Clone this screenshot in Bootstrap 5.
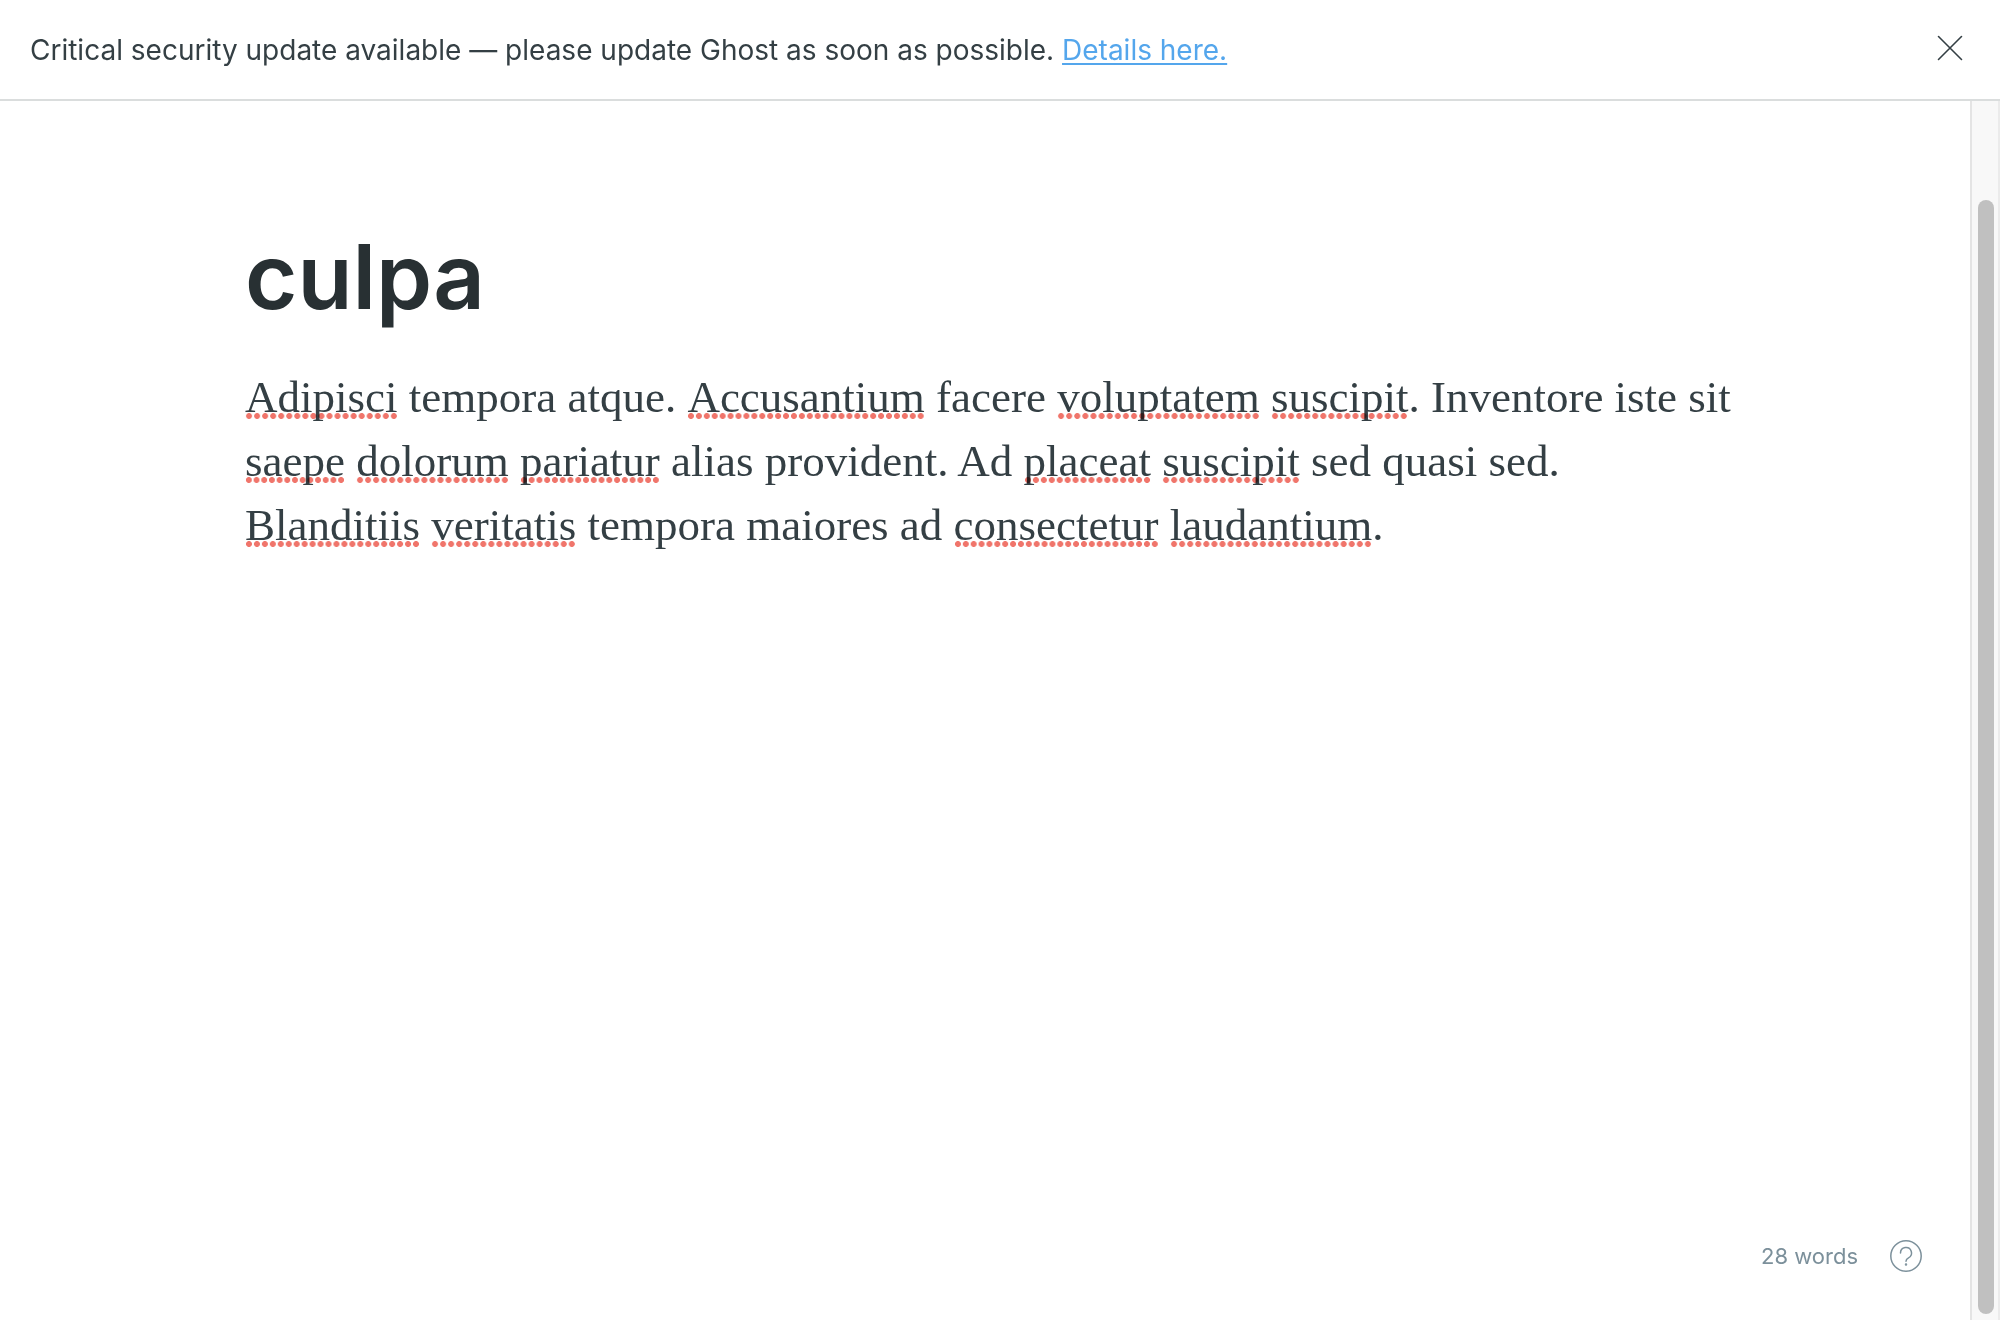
<!DOCTYPE html>
<html lang="en">
<head>
<meta charset="utf-8">
<meta name="viewport" content="width=device-width, initial-scale=1">
<title>Ghost editor</title>
<link href="https://cdn.jsdelivr.net/npm/bootstrap@5.3.0/dist/css/bootstrap.min.css" rel="stylesheet">
<style>
body { font-family: Inter, "Liberation Sans", sans-serif; color: #343f44; background: #fff; }
.notice { padding: 0 36px 0 30px; min-height: 101px; border-bottom: 2px solid #dadddd; font-size: 28px; line-height: 36px; }
.notice a { color: #54a6ec; text-decoration-thickness: 2px; text-underline-offset: 3px; }
.close-btn { width: 28px; height: 28px; margin-bottom: 3px; }
.writing { padding: 122px 235px 0 245px; }
.post-title { font-size: 90px; line-height: 108px; font-weight: 600; color: #283033; resize: none; outline: 0; overflow: hidden; height: 108px; }
.post-text { font-family: "Liberation Serif", Georgia, serif; font-size: 45px; line-height: 64px; margin-top: 34px; outline: 0; }
.typo { position: relative; display: inline-block; }
.typo::after { content: ""; position: absolute; left: 0; right: 0; bottom: 10px; height: 6px; mix-blend-mode: multiply;
  background: radial-gradient(circle at center, #f0756b 0 2.6px, transparent 3.3px) 0 0 / 8px 6px round; }
.status { gap: 32px; padding: 0 48px 48px; font-size: 22px; line-height: 32px; color: #7c909b; }
.help-link { color: inherit; }
.scroll-track { width: 30px; padding: 99px 4px 6px 6px; background: #f8f8f8; border-left: 2px solid #e4e4e4; border-right: 2px solid #ebebeb; }
.scroll-thumb { background: #c0c0c0; border-radius: 8px; }
</style>
</head>
<body>
<div class="d-flex flex-column vh-100">
  <header class="notice d-flex align-items-center justify-content-between">
    <div>Critical security update available — please update Ghost as soon as possible. <a href="#details">Details here.</a></div>
    <button type="button" class="close-btn btn p-0 border-0 d-flex" aria-label="Close">
      <svg width="28" height="28" viewBox="0 0 28 28" fill="none" stroke="#343f44" stroke-width="1.6" stroke-linecap="round"><path d="M2.500 2.500l23 23M25.500 2.500l-23 23"/></svg>
    </button>
  </header>
  <div class="d-flex flex-grow-1">
    <main class="d-flex flex-column flex-grow-1">
      <div class="writing flex-grow-1">
        <textarea class="post-title d-block w-100 border-0 p-0 bg-transparent" rows="1" spellcheck="false" aria-label="Post title">culpa</textarea>
        <div class="post-text" contenteditable="true" spellcheck="false" role="textbox" aria-multiline="true" aria-label="Post content"><p class="mb-0"><span class="typo">Adipisci</span> tempora atque. <span class="typo">Accusantium</span> facere <span class="typo">voluptatem</span> <span class="typo">suscipit</span>. Inventore iste sit <span class="typo">saepe</span> <span class="typo">dolorum</span> <span class="typo">pariatur</span> alias provident. Ad <span class="typo">placeat</span> <span class="typo">suscipit</span> sed quasi sed. <span class="typo">Blanditiis</span> <span class="typo">veritatis</span> tempora maiores ad <span class="typo">consectetur</span> <span class="typo">laudantium</span>.</p></div>
      </div>
      <footer class="status d-flex align-items-center justify-content-end">
        <span>28 words</span>
        <a class="help-link d-flex" href="#help" aria-label="Help">
          <svg width="32" height="32" viewBox="0 0 32 32" fill="none" stroke="currentColor" stroke-width="1.5" stroke-linecap="round" stroke-linejoin="round"><circle cx="16" cy="16" r="15.2"/><path d="M10.500 13a5.500 5.500 0 1 1 8 4.900c-1.600.8-2.500 1.400-2.500 3.300"/><circle cx="16" cy="24.600" r=".5" fill="currentColor"/></svg>
        </a>
      </footer>
    </main>
    <div class="scroll-track d-flex flex-shrink-0" aria-hidden="true"><div class="scroll-thumb flex-grow-1"></div></div>
  </div>
</div>
<script src="https://cdn.jsdelivr.net/npm/bootstrap@5.3.0/dist/js/bootstrap.bundle.min.js"></script>
</body>
</html>
